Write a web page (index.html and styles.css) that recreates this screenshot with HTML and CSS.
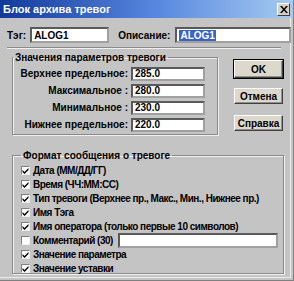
FILE: index.html
```html
<!DOCTYPE html>
<html lang="ru">
<head>
    <meta charset="UTF-8">
    <title>Блок архива тревог</title>
    <link rel="stylesheet" href="styles.css">
</head>
<body>
    <div class="dialog">
        <div class="titlebar">
            <span class="title">Блок архива тревог</span>
            <span class="close">
                <svg width="8" height="7" viewBox="0 0 8 7"><path d="M0 0h2l2 2.5L6 0h2L5 3.5 8 7H6L4 4.5 2 7H0l3-3.5z" fill="#000"/></svg>
            </span>
        </div>

        <div class="content">
            <div class="tag-row">
                <span class="lbl">Тэг:</span>
                <span class="field tag-field">ALOG1</span>
                <span class="lbl desc-lbl">Описание:</span>
                <span class="field desc-field"><span class="selected">ALOG1</span></span>
            </div>
            <div class="separator"></div>

            <div class="middle">
                <fieldset class="group limits">
                    <legend>Значения параметров тревоги</legend>
                    <div class="limit-row"><span class="lbl">Верхнее предельное:</span><span class="field num">285.0</span></div>
                    <div class="limit-row"><span class="lbl">Максимальное :</span><span class="field num">280.0</span></div>
                    <div class="limit-row"><span class="lbl">Минимальное :</span><span class="field num">230.0</span></div>
                    <div class="limit-row"><span class="lbl">Нижнее предельное:</span><span class="field num">220.0</span></div>
                </fieldset>
                <div class="buttons">
                    <button class="btn default">OK</button>
                    <button class="btn">Отмена</button>
                    <button class="btn">Справка</button>
                </div>
            </div>

            <fieldset class="group format">
                <legend>Формат сообщения о тревоге</legend>
                <div class="check-row"><span class="box checked"></span>Дата (ММ/ДД/ГГ)</div>
                <div class="check-row"><span class="box checked"></span>Время (ЧЧ:ММ:СС)</div>
                <div class="check-row"><span class="box checked"></span>Тип тревоги (Верхнее пр., Макс., Мин., Нижнее пр.)</div>
                <div class="check-row"><span class="box checked"></span>Имя Тэга</div>
                <div class="check-row"><span class="box checked"></span>Имя оператора (только первые 10 символов)</div>
                <div class="check-row"><span class="box"></span><span class="comment-label">Комментарий (30)</span><span class="field comment-field"></span></div>
                <div class="check-row"><span class="box checked"></span>Значение параметра</div>
                <div class="check-row"><span class="box checked"></span>Значение уставки</div>
            </fieldset>
        </div>
    </div>
</body>
</html>
```

FILE: styles.css
```css
body {
    margin: 0;
    padding: 0;
    background-color: #c4c4c4;
    font-family: "Liberation Sans", Arial, sans-serif;
    font-size: 10px;
    font-weight: bold;
    color: #000;
}

.dialog {
    width: 294px;
    height: 281px;
    box-sizing: border-box;
    background-color: #c4c4c4;
    border-right: 1px solid #808080;
    border-bottom: 1px solid #808080;
    box-shadow: inset -2px -2px 0 #c4c4c4, inset -3px -3px 0 #ececec;
}

.titlebar {
    height: 18px;
    display: flex;
    align-items: center;
    justify-content: space-between;
    padding: 0 3px 0 3px;
    background: linear-gradient(to right, #12399c, #5a8ae0 55%, #a6caf0);
}

.title {
    color: #fff;
    font-size: 11px;
    font-weight: bold;
}

.close {
    width: 11px;
    height: 11px;
    display: flex;
    align-items: center;
    justify-content: center;
    background-color: #d4d0c8;
    border: 1px solid;
    border-color: #fff #404040 #404040 #fff;
}

.content {
    padding: 9px 0 0 7px;
}

.tag-row {
    display: flex;
    align-items: center;
    height: 16px;
}

.field {
    display: flex;
    align-items: center;
    box-sizing: border-box;
    background-color: #fff;
    border: 2px solid;
    border-color: #5a5a5a #a0a0a0 #a0a0a0 #5a5a5a;
    padding-left: 2px;
}

.tag-field {
    margin-left: 4px;
    width: 79px;
    height: 16px;
}

.desc-lbl {
    margin-left: 9px;
}

.desc-field {
    margin-left: 5px;
    width: 116px;
    height: 16px;
}

.selected {
    background-color: #3a63c8;
    color: #fff;
    padding: 0 1px;
}

.separator {
    width: 274px;
    height: 1px;
    margin-top: 4px;
    background-color: #8a8a8a;
    border-bottom: 1px solid #f0f0f0;
}

.middle {
    display: flex;
    margin-top: 3px;
}

.group {
    margin: 0;
    border: 1px solid #8a8a8a;
    box-shadow: 1px 1px 0 #f0f0f0, inset 1px 1px 0 #f0f0f0;
    padding: 0;
}

.group legend {
    padding: 0 2px;
}

.limits {
    margin-left: 5px;
    width: 206px;
    height: 83px;
    box-sizing: border-box;
    padding: 2px 0 0 0;
}

.limit-row {
    display: flex;
    justify-content: flex-end;
    align-items: center;
    height: 17px;
    padding-right: 12px;
}

.limit-row .lbl {
    margin-right: 3px;
}

.num {
    width: 74px;
    height: 14px;
}

.buttons {
    display: flex;
    flex-direction: column;
    margin-left: 16px;
    margin-top: 8px;
}

.btn {
    width: 49px;
    height: 16px;
    margin-bottom: 11px;
    padding: 0;
    font-family: inherit;
    font-size: 10px;
    font-weight: bold;
    background-color: #dcd8cc;
    border: 1px solid;
    border-color: #fff #404040 #404040 #fff;
    box-shadow: inset -1px -1px 0 #909090;
}

.btn.default {
    height: 18px;
    margin-bottom: 10px;
    outline: 1px solid #000;
}

.format {
    margin: 8px 0 0 5px;
    width: 272px;
    height: 124px;
    box-sizing: border-box;
    padding: 2px 0 0 8px;
}

.check-row {
    display: flex;
    align-items: center;
    height: 14px;
    white-space: nowrap;
    letter-spacing: -0.5px;
}

.box {
    width: 9px;
    height: 9px;
    box-sizing: border-box;
    margin-right: 3px;
    background-color: #fff;
    border: 1px solid;
    border-color: #808080 #f0f0f0 #f0f0f0 #808080;
}

.box.checked {
    background: #fff url("data:image/svg+xml;utf8,<svg xmlns='http://www.w3.org/2000/svg' width='7' height='7'><path d='M0.5 3l2 2 4-4v2l-4 4-2-2z' fill='black'/></svg>") no-repeat center;
}

.comment-label {
    width: 85px;
}

.comment-field {
    width: 160px;
    height: 15px;
}
```
